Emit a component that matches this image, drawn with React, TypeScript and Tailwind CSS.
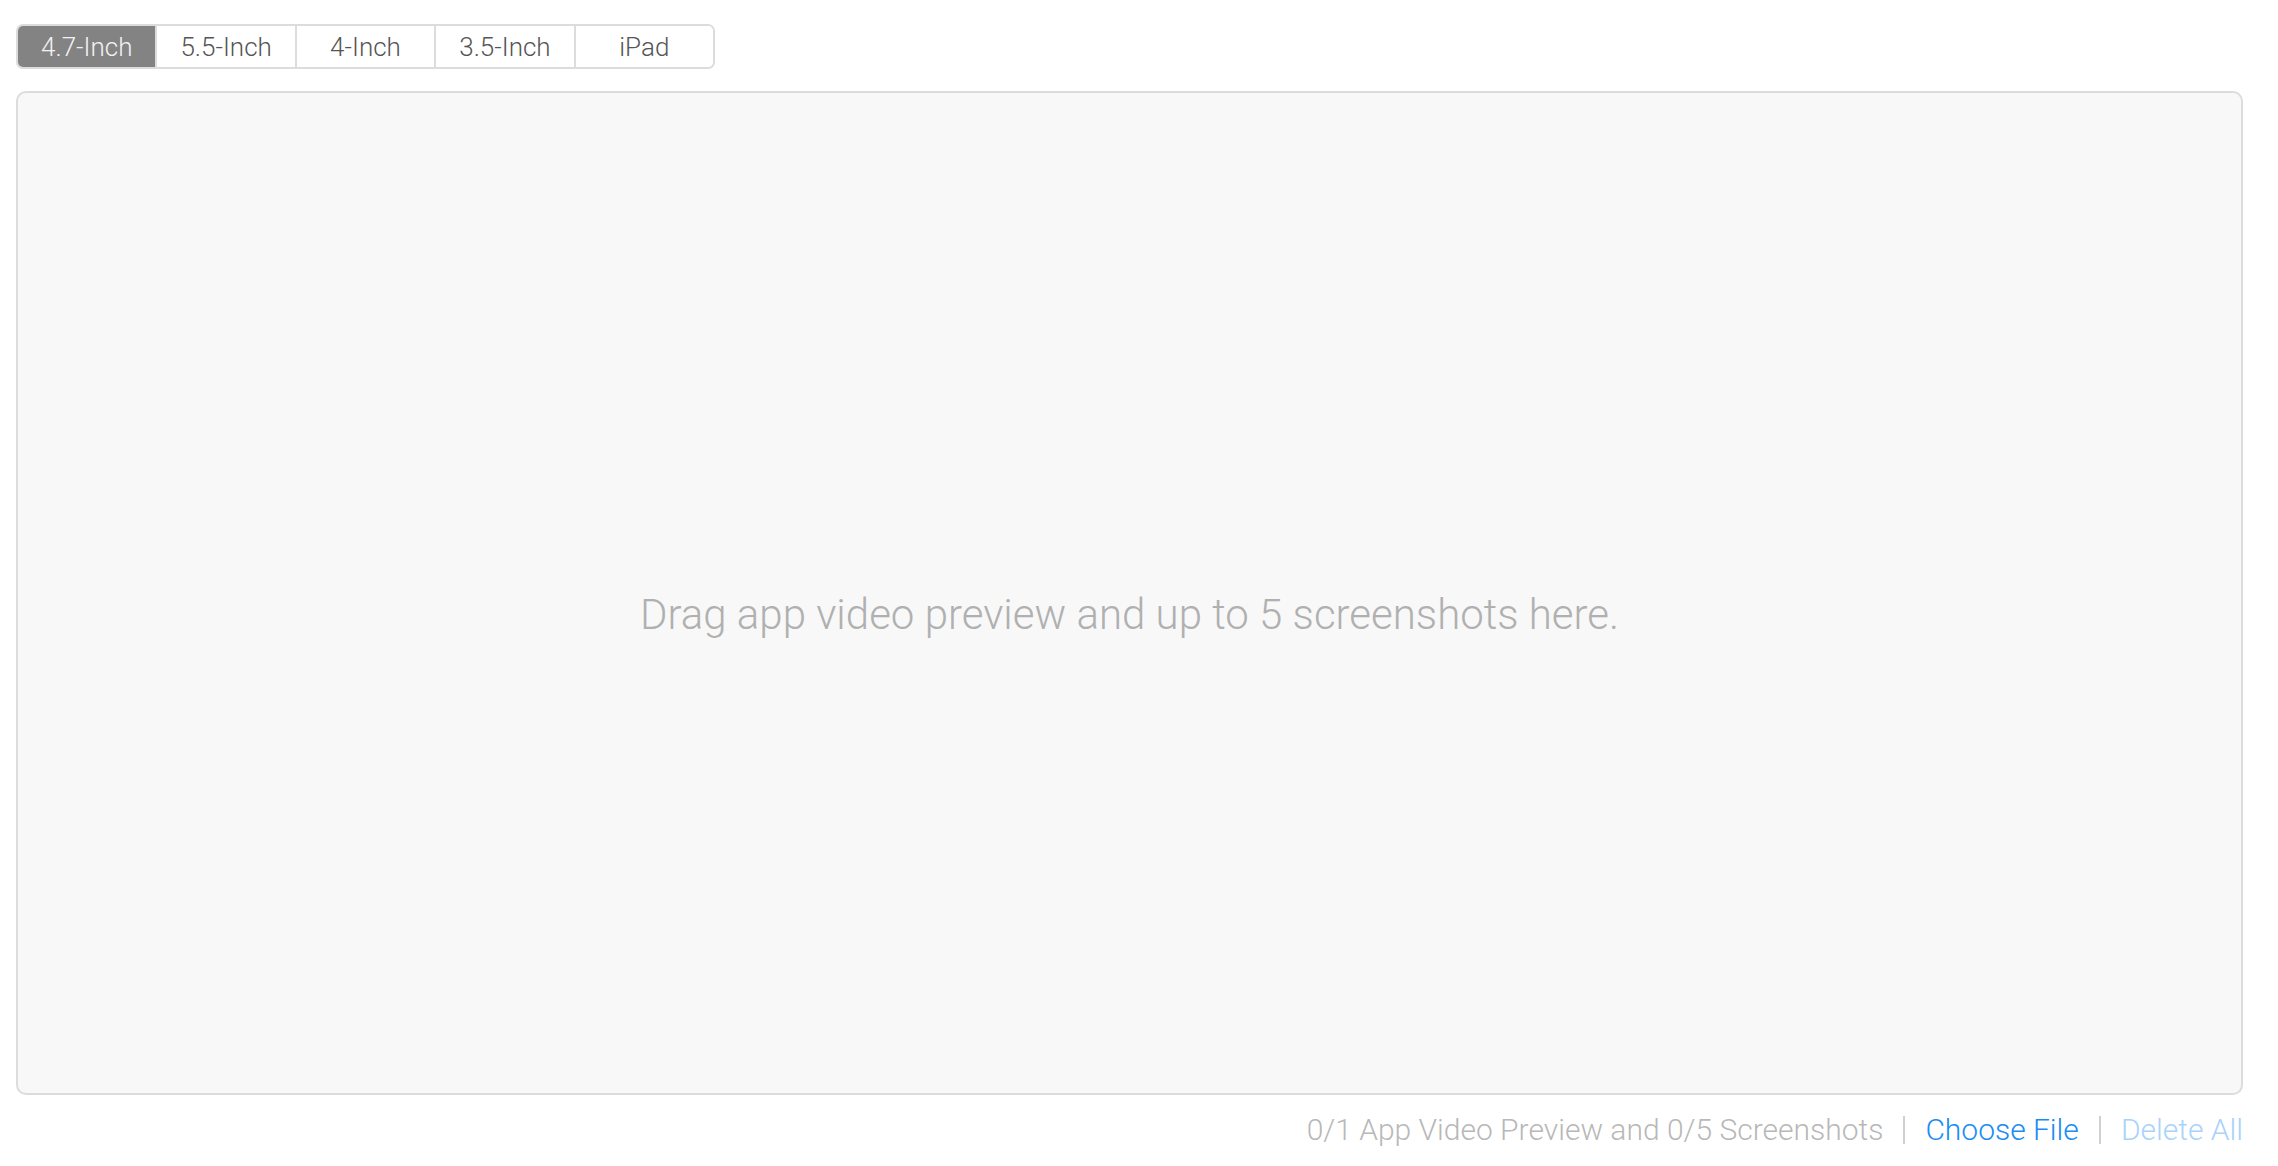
import { useState } from 'react';

const sizes = ['4.7-Inch', '5.5-Inch', '4-Inch', '3.5-Inch', 'iPad'];

export default function App() {
  const [active, setActive] = useState('4.7-Inch');

  return (
    <div className="min-h-screen bg-white pl-4 pr-[35px] pt-6 font-light text-[#555]" style={{ fontFamily: 'Roboto, "Liberation Sans", sans-serif' }}>
      <div className="flex w-[699px] h-[45px] rounded-[7px] border-2 border-[#dcdcdc] overflow-hidden">
        {sizes.map((s, i) => (
          <button
            key={s}
            onClick={() => setActive(s)}
            className={`flex-1 flex items-center justify-center pt-[2px] text-[26px] ${i > 0 ? 'border-l-2 border-[#dcdcdc]' : ''} ${active === s ? 'bg-[#838383] text-[#f2f2f2]' : 'bg-white text-[#555]'}`}
          >
            {s}
          </button>
        ))}
      </div>

      <div className="mt-[22px] h-[1004px] rounded-[10px] border-2 border-[#dcdcdc] bg-[#f8f8f8] flex items-center justify-center pt-[42px]">
        <span className="text-[42px] text-[#b0b0b0]">Drag app video preview and up to 5 screenshots here.</span>
      </div>

      <div className="flex justify-end items-center mt-[20px] text-[30px] leading-none">
        <span className="text-[#b8b8b8]">0/1 App Video Preview and 0/5 Screenshots</span>
        <span className="mx-[20px] h-[28px] w-[2px] bg-[#d0d0d0]" />
        <button className="text-[#1a8cf5] font-light">Choose File</button>
        <span className="mx-[20px] h-[28px] w-[2px] bg-[#d0d0d0]" />
        <button className="text-[#a9d3fa] font-light">Delete All</button>
      </div>
    </div>
  );
}
